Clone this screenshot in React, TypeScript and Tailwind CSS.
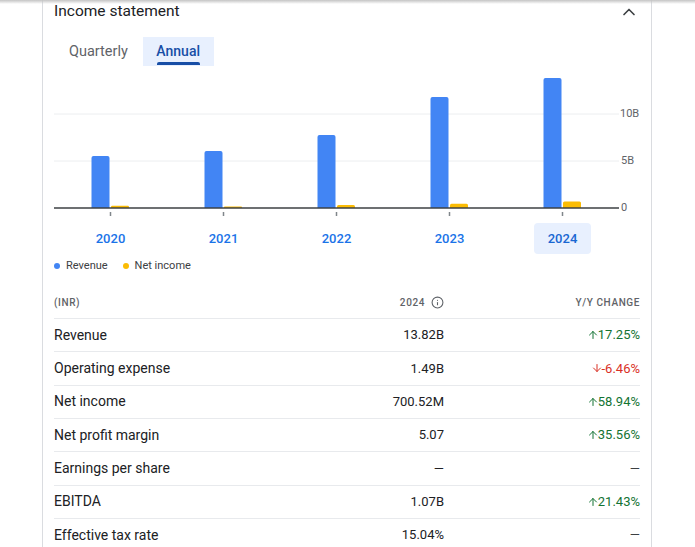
import { ChevronUp, Info, ArrowUp, ArrowDown } from 'lucide-react';

type Year = { label: string; revenue: number; netIncome: number };

const years: Year[] = [
  { label: '2020', revenue: 5.53, netIncome: 0.25 },
  { label: '2021', revenue: 6.06, netIncome: 0.17 },
  { label: '2022', revenue: 7.77, netIncome: 0.32 },
  { label: '2023', revenue: 11.8, netIncome: 0.44 },
  { label: '2024', revenue: 13.82, netIncome: 0.7 },
];

type Row = { name: string; value: string; change?: { dir: 'up' | 'down'; text: string } };

const rows: Row[] = [
  { name: 'Revenue', value: '13.82B', change: { dir: 'up', text: '17.25%' } },
  { name: 'Operating expense', value: '1.49B', change: { dir: 'down', text: '-6.46%' } },
  { name: 'Net income', value: '700.52M', change: { dir: 'up', text: '58.94%' } },
  { name: 'Net profit margin', value: '5.07', change: { dir: 'up', text: '35.56%' } },
  { name: 'Earnings per share', value: '—' },
  { name: 'EBITDA', value: '1.07B', change: { dir: 'up', text: '21.43%' } },
  { name: 'Effective tax rate', value: '15.04%' },
];

const GROUP = 113;
const BASE = 142;
const PX_PER_B = 9.4;

// bar with rounded top corners
function barPath(x: number, w: number, h: number, r = 2) {
  const top = BASE - h;
  const rr = Math.min(r, h / 2, w / 2);
  return `M${x} ${BASE} V${top + rr} Q${x} ${top} ${x + rr} ${top} H${x + w - rr} Q${x + w} ${top} ${x + w} ${top + rr} V${BASE} Z`;
}

function Chart() {
  return (
    <svg width={586} height={152} className="block">
      <line x1={0} x2={565} y1={48} y2={48} stroke="#eceef0" strokeWidth={1} />
      <line x1={0} x2={565} y1={95} y2={95} stroke="#eceef0" strokeWidth={1} />
      {years.map((y, i) => {
        const gx = i * GROUP;
        return (
          <g key={y.label}>
            <path d={barPath(gx + 37.5, 18, y.revenue * PX_PER_B)} fill="#4285f4" />
            <path d={barPath(gx + 57, 18, y.netIncome * PX_PER_B, 1.5)} fill="#fbbc04" />
            <line x1={gx + 56.5} x2={gx + 56.5} y1={146} y2={150} stroke="#80868b" strokeWidth={1.5} />
          </g>
        );
      })}
      <line x1={0} x2={565} y1={142} y2={142} stroke="#3c4043" strokeWidth={1.5} />
      <g fontFamily="Roboto, sans-serif" fontSize={11} fill="#5f6368">
        <text x={566} y={48} dominantBaseline="middle">10B</text>
        <text x={567} y={95} dominantBaseline="middle">5B</text>
        <text x={567} y={142} dominantBaseline="middle">0</text>
      </g>
    </svg>
  );
}

function Change({ c }: { c?: Row['change'] }) {
  if (!c) return <span className="text-[#3c4043]">—</span>;
  if (c.dir === 'up')
    return (
      <span className="flex items-center justify-end text-[#137333]">
        <ArrowUp size={12} strokeWidth={2} className="-mr-[1px]" />
        {c.text}
      </span>
    );
  return (
    <span className="flex items-center justify-end text-[#d93025]">
      <ArrowDown size={12} strokeWidth={2} className="-mr-[1px]" />
      {c.text}
    </span>
  );
}

export default function App() {
  return (
    <div className="relative w-[695px] h-[547px] overflow-hidden bg-white font-['Roboto',sans-serif]">
      <div className="absolute top-0 left-0 right-0 h-[4px] bg-gradient-to-b from-[#c4c4c4] to-transparent" />
      <div className="ml-[42px] w-[610px] h-full border-x border-[#dadce0] px-[11px]">
        <div className="flex items-center justify-between h-[22px] pt-[1px]">
          <h2 className="text-[15.5px] font-normal text-[#202124]">Income statement</h2>
          <ChevronUp size={20} strokeWidth={2} className="text-[#3c4043] mr-[1px]" />
        </div>

        <div className="flex mt-[15px] h-[29px]">
          <button className="px-[15px] text-[14.5px] font-normal text-[#5f6368]">Quarterly</button>
          <button className="relative px-[13.5px] text-[14px] font-medium text-[#174ea6] bg-[#e8f0fe]">
            Annual
            <span className="absolute left-[14px] right-[14px] bottom-[1px] h-[3px] rounded-t-[2px] bg-[#174ea6]" />
          </button>
        </div>

        <Chart />

        <div className="flex w-[565px] mt-[5px]">
          {years.map((y) => (
            <div key={y.label} className="w-[113px] flex justify-center">
              <div
                className={
                  y.label === '2024'
                    ? 'h-[31px] px-[14px] flex items-center rounded-[4px] bg-[#e8f0fe] text-[13px] font-medium text-[#1967d2]'
                    : 'h-[31px] px-[14px] flex items-center rounded-[4px] text-[13px] font-medium text-[#1a73e8]'
                }
              >
                {y.label}
              </div>
            </div>
          ))}
        </div>

        <div className="flex items-center h-[14px] mt-[5px] text-[11px] text-[#3c4043]">
          <span className="w-[6px] h-[6px] rounded-full bg-[#4285f4]" />
          <span className="ml-[6px]">Revenue</span>
          <span className="ml-[15px] w-[6px] h-[6px] rounded-full bg-[#fbbc04]" />
          <span className="ml-[6px]">Net income</span>
        </div>

        <div className="mt-[13px]">
          <div className="grid grid-cols-[1fr_150px_196px] items-center h-[33px] border-b border-[#e8eaed] text-[10px] font-medium tracking-[0.6px] text-[#5f6368]">
            <span>(INR)</span>
            <span className="flex items-center justify-end gap-[6px]">
              2024
              <Info size={13} strokeWidth={2} />
            </span>
            <span className="text-right">Y/Y CHANGE</span>
          </div>
          {rows.map((r) => (
            <div
              key={r.name}
              className="grid grid-cols-[1fr_150px_196px] items-center h-[33.33px] border-b border-[#e8eaed] text-[#202124]"
            >
              <span className="text-[14px]">{r.name}</span>
              <span className="text-right text-[13px]">{r.value}</span>
              <span className="flex justify-end text-[13px]">
                <Change c={r.change} />
              </span>
            </div>
          ))}
        </div>
      </div>
    </div>
  );
}
